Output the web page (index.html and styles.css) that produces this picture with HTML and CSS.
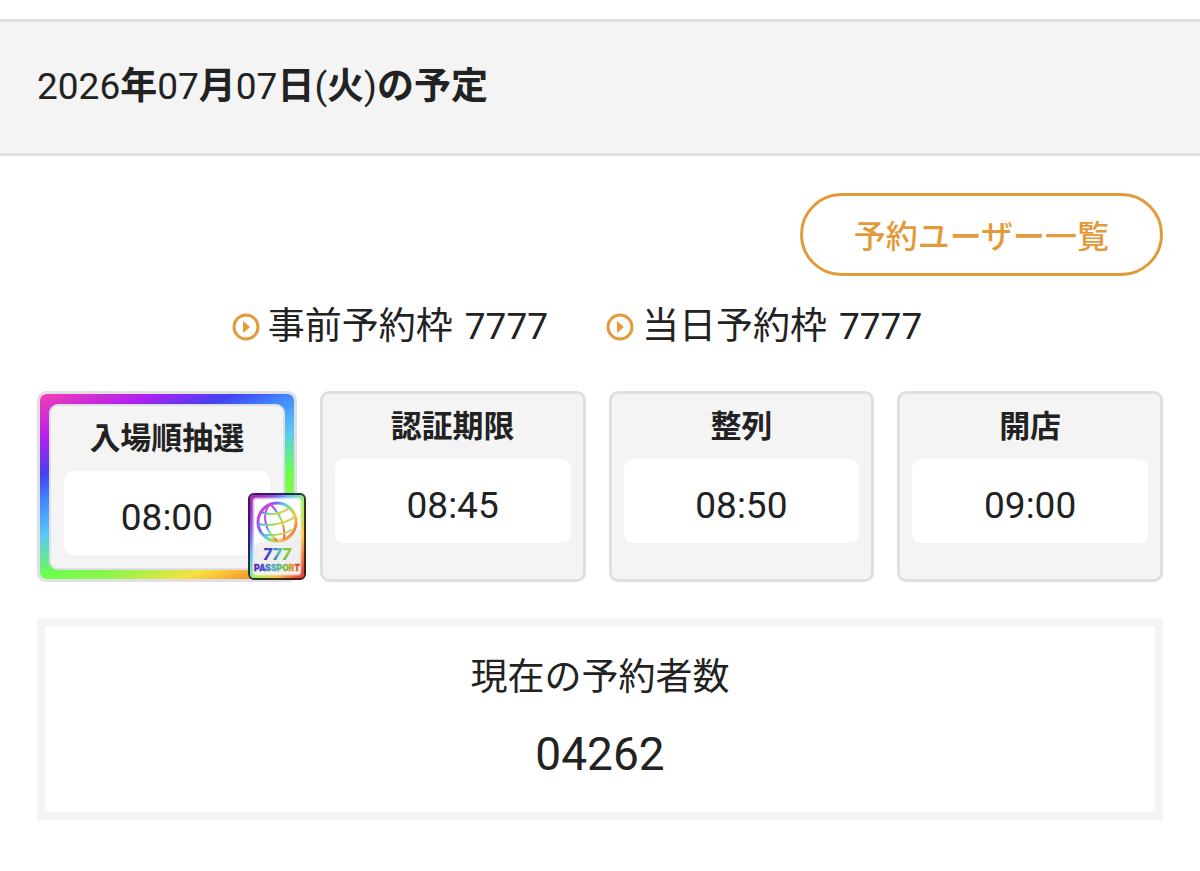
FILE: index.html
```html
<!DOCTYPE html>
<html lang="ja">
  <head>
    <meta charset="UTF-8" />
    <meta name="viewport" content="width=device-width, initial-scale=1.0" />
    <title>2026年07月07日(火)の予定</title>
    <link rel="stylesheet" href="styles.css">
  </head>
  <body>
    <header class="header">
      <h1 class="title">2026<b>年</b>07<b>月</b>07<b>日</b>(<b>火</b>)<b>の予定</b></h1>
    </header>

    <main class="content">
      <a class="users-link" href="#users">予約ユーザー一覧</a>

      <ul class="slots">
        <li class="slot">
          <svg class="slot-icon" viewBox="0 0 28 28" aria-hidden="true">
            <circle cx="14" cy="14" r="12" fill="none" stroke="currentColor" stroke-width="3" />
            <path d="M11 8v12l7-6z" fill="currentColor" />
          </svg>
          <span>事前予約枠</span>
          <span class="slot-number">7777</span>
        </li>
        <li class="slot">
          <svg class="slot-icon" viewBox="0 0 28 28" aria-hidden="true">
            <circle cx="14" cy="14" r="12" fill="none" stroke="currentColor" stroke-width="3" />
            <path d="M11 8v12l7-6z" fill="currentColor" />
          </svg>
          <span>当日予約枠</span>
          <span class="slot-number">7777</span>
        </li>
      </ul>

      <div class="schedule">
        <section class="card card-rainbow">
          <div class="card-panel">
            <h2 class="card-title">入場順抽選</h2>
            <p class="card-time">08:00</p>
          </div>
          <svg class="passport" viewBox="0 0 58 87">
            <defs>
              <linearGradient id="edge" x1="0" y1="0" x2="1" y2="1">
                <stop offset="0" stop-color="#a010a8" />
                <stop offset="0.2" stop-color="#8a3ce8" />
                <stop offset="0.38" stop-color="#55c8f0" />
                <stop offset="0.55" stop-color="#a0ee50" />
                <stop offset="0.75" stop-color="#f8c040" />
                <stop offset="1" stop-color="#d82020" />
              </linearGradient>
              <linearGradient id="dark" x1="0" y1="0" x2="1" y2="1">
                <stop offset="0" stop-color="#50105c" />
                <stop offset="0.3" stop-color="#2c2060" />
                <stop offset="0.5" stop-color="#20402c" />
                <stop offset="0.75" stop-color="#403010" />
                <stop offset="1" stop-color="#501010" />
              </linearGradient>
              <linearGradient id="globe" x1="0" y1="0.2" x2="1" y2="0.8">
                <stop offset="0" stop-color="#e040d8" />
                <stop offset="0.25" stop-color="#8a58f0" />
                <stop offset="0.42" stop-color="#50c8f0" />
                <stop offset="0.6" stop-color="#90e060" />
                <stop offset="0.78" stop-color="#f4c840" />
                <stop offset="1" stop-color="#f06050" />
              </linearGradient>
              <linearGradient id="letters" x1="0" y1="0" x2="1" y2="0">
                <stop offset="0" stop-color="#6a1cb0" />
                <stop offset="0.2" stop-color="#3848c8" />
                <stop offset="0.42" stop-color="#48a8c0" />
                <stop offset="0.65" stop-color="#68b840" />
                <stop offset="0.82" stop-color="#d89828" />
                <stop offset="1" stop-color="#c83028" />
              </linearGradient>
              <linearGradient id="sevens" x1="0" y1="0" x2="1" y2="0">
                <stop offset="0" stop-color="#7020b8" />
                <stop offset="0.3" stop-color="#3850d0" />
                <stop offset="0.55" stop-color="#50b8b0" />
                <stop offset="0.8" stop-color="#70c840" />
                <stop offset="1" stop-color="#b0c038" />
              </linearGradient>
              <filter id="soft" x="-10%" y="-10%" width="120%" height="120%">
                <feGaussianBlur stdDeviation="1" />
              </filter>
            </defs>
            <rect x="1" y="1" width="56" height="85" rx="5" fill="#fff" />
            <rect x="3" y="3" width="52" height="81" rx="4" fill="none" stroke="url(#edge)" stroke-width="4" filter="url(#soft)" />
            <path d="M6 53C18 44 38 46 52 36V80H6z" fill="#e8e8e8" opacity="0.7" />
            <rect x="1" y="1" width="56" height="85" rx="5" fill="none" stroke="url(#dark)" stroke-width="2" />
            <g fill="none" stroke="url(#globe)" stroke-width="2">
              <circle cx="29" cy="29" r="19" stroke-width="3" />
              <path d="M22 11C13 21 17 38 29 48" />
              <path d="M22 11C32 20 38 34 36 46" />
              <path d="M13 19C22 23 34 21 41 15" />
              <path d="M10 31C22 34 38 30 47 24" />
              <path d="M15 42C25 43 37 41 46 36" />
            </g>
            <text class="passport-number" x="29" y="67" text-anchor="middle" fill="url(#sevens)">777</text>
            <text class="passport-name" x="29" y="78" text-anchor="middle" fill="url(#letters)" stroke="url(#letters)">PASSPORT</text>
          </svg>
        </section>
        <section class="card">
          <h2 class="card-title">認証期限</h2>
          <p class="card-time">08:45</p>
        </section>
        <section class="card">
          <h2 class="card-title">整列</h2>
          <p class="card-time">08:50</p>
        </section>
        <section class="card">
          <h2 class="card-title">開店</h2>
          <p class="card-time">09:00</p>
        </section>
      </div>

      <section class="count">
        <h2 class="count-title">現在の予約者数</h2>
        <p class="count-number">04262</p>
      </section>
    </main>
  </body>
</html>
```
FILE: styles.css
```css
* {
  margin: 0;
  padding: 0;
  box-sizing: border-box;
}

body {
  font-family: Roboto, "Noto Sans CJK JP", sans-serif;
  font-size: 37px;
  line-height: 54px;
  background: #fff;
  color: #222;
}

.header {
  margin-top: 19px;
  padding: 38px 37px 39px;
  background: #f4f4f4;
  border-top: 3px solid #dfdfdf;
  border-bottom: 3px solid #dfdfdf;
}

.title {
  font-size: 37px;
  font-weight: 400;
}

.title b {
  font-weight: 700;
}

.content {
  padding: 37px;
  display: flex;
  flex-direction: column;
}

.users-link {
  align-self: flex-end;
  padding: 14px 51px 9px;
  border: 3px solid #e39a3b;
  border-radius: 42px;
  font-size: 32px;
  font-weight: 500;
  color: #e39a3b;
  text-decoration: none;
}

.slots {
  display: flex;
  justify-content: center;
  margin-top: 24px;
  gap: 12px;
  list-style: none;
}

.slot {
  display: flex;
  align-items: center;
  margin-right: 46px;
}

.slot-icon {
  width: 28px;
  height: 28px;
  margin-right: 8px;
  color: #e39a3b;
}

.slot-number {
  margin-left: 12px;
  font-weight: 450;
}

.schedule {
  display: grid;
  grid-template-columns: 260fr 266fr 266fr 266fr;
  gap: 23px;
  margin-top: 37px;
}

.card {
  padding: 6px 12px;
  background: #f4f4f4;
  border: 3px solid #dfdfdf;
  border-radius: 9px;
  text-align: center;
}

.card-title {
  font-size: 31px;
  font-weight: 700;
  line-height: 54px;
}

.card-time {
  margin-top: 5px;
  padding: 20px 0 10px;
  background: #fff;
  border-radius: 9px;
}

.card-rainbow {
  position: relative;
  padding: 10px 9px 9px;
  border-color: #dfdfe6;
  background: linear-gradient(
    157deg,
    #f53fb0 0%,
    #b020f0 16%,
    #4440f0 28%,
    #4090ff 38%,
    #5cc8f4 49%,
    #6cff4c 63%,
    #90f44c 72%,
    #f8e040 84%,
    #f8a030 92%,
    #f04040 100%
  );
  background-clip: padding-box;
}

.card-panel {
  padding: 6px 13px 13px;
  background: #f4f4f4;
  border: 2px solid #dfdfe6;
  border-radius: 9px;
}

/* ticket badge over the card's lower right corner */
.passport {
  position: absolute;
  right: -12px;
  bottom: -1px;
  width: 58px;
  height: 87px;
}

.passport-number {
  font-size: 17px;
  font-weight: 900;
  font-style: italic;
}

.passport-name {
  font-size: 9px;
  font-weight: 900;
  stroke-width: 0.3px;
}

.count {
  margin-top: 36px;
  padding: 25px;
  border: 8px solid #f4f4f4;
  text-align: center;
}

.count-title {
  font-size: 37px;
  font-weight: 400;
}

.count-number {
  margin-top: 16px;
  font-size: 46px;
  font-weight: 450;
  line-height: 66px;
}
```
